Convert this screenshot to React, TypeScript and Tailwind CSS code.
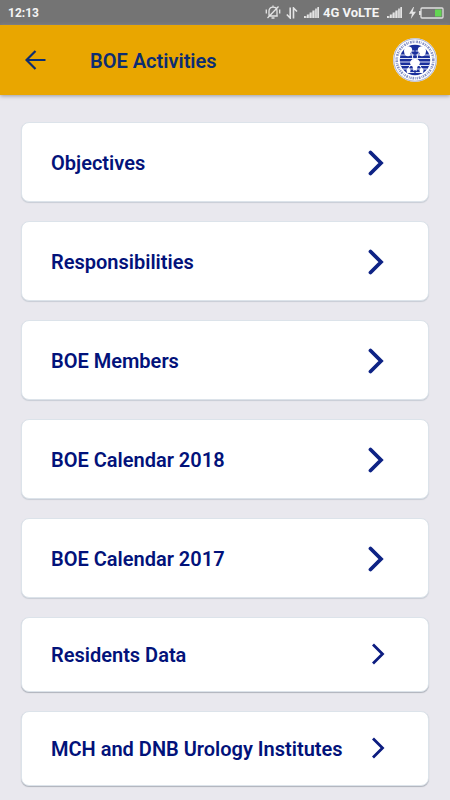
type Activity = { title: string; compact?: boolean };

const activities: Activity[] = [
  { title: "Objectives" },
  { title: "Responsibilities" },
  { title: "BOE Members" },
  { title: "BOE Calendar 2018" },
  { title: "BOE Calendar 2017" },
  { title: "Residents Data", compact: true },
  { title: "MCH and DNB Urology Institutes", compact: true },
];

function SignalIcon() {
  return (
    <svg width="15" height="11" viewBox="0 0 16 11" preserveAspectRatio="none" fill="#e4e4e4" aria-hidden="true">
      <path d="M0 11V9h2v2zM3 11V7.500h2V11zM6 11V5.500h2V11zM9 11V3.500h2V11zM12 11V1.500h1.500V11zM14.300 11V0H16v11z" />
      <path d="M0 11L16 0v11z" opacity=".45" />
    </svg>
  );
}

function StatusBar() {
  return (
    <div className="flex h-[25px] items-center justify-between bg-[#747474] pr-[6px] pl-2 font-bold text-[#f4f4f4]">
      <span className="text-xs">12:13</span>
      <div className="flex items-center">
        <svg width="16" height="15" viewBox="0 0 16 15" fill="none" stroke="#e4e4e4" strokeWidth="1.300" aria-hidden="true">
          <path d="M3.500 11h9.300M4 10.500V6c0-2.300 1.500-3.800 4-3.800S12 3.700 12 6v4.500M8 2V.5M6.500 13h3M1.300 4.500v4M14.700 4.500v4M13.500 1.500L2.500 13" />
        </svg>
        <svg className="ml-[5px]" width="12" height="12" viewBox="0 0 12 12" fill="none" stroke="#e4e4e4" strokeWidth="1.600" aria-hidden="true">
          <path d="M4.200 0.500v10.500L.8 7.500M7.500 11.500V1L11 4.500" />
        </svg>
        <span className="ml-[6px] flex"><SignalIcon /></span>
        <span className="ml-1 text-[13px]">4G VoLTE</span>
        <span className="ml-2 flex"><SignalIcon /></span>
        <svg className="ml-[7px]" width="7" height="12" viewBox="0 0 7 12" fill="#e4e4e4" aria-hidden="true">
          <path d="M4.300 0L0 6.700h3L1.800 12 7 4.800H3.700L5 0z" />
        </svg>
        <svg className="ml-[3px]" width="25" height="12" viewBox="0 0 25 12" aria-hidden="true">
          <rect x="2" y="1" width="22" height="10" rx="1" fill="none" stroke="#dedede" strokeWidth="1.300" />
          <path d="M0 4h2v4H0z" fill="#dedede" />
          <path d="M16 2.500h6.500v7H16z" fill="#63d552" />
        </svg>
      </div>
    </div>
  );
}

function SocietyLogo() {
  return (
    <svg width="44" height="44" viewBox="0 0 44 44" aria-hidden="true">
      <circle cx="22" cy="22" r="22" fill="#fff" />
      <circle cx="22" cy="22" r="21.200" fill="none" stroke="#8d98c8" strokeWidth=".8" />
      <circle cx="22" cy="22" r="18.300" fill="none" stroke="#8792c6" strokeWidth="2.600" strokeDasharray="1.200 .8 .7 1.100 1.700 .9" />
      <circle cx="22" cy="22" r="15.200" fill="#1a2f9c" />
      <path d="M11 13h22M8 17h28M7 20.500h30M7 24h30M8 27.500h28M10 31h24M14 34.500h16" fill="none" stroke="#dfe4f5" strokeWidth="1.100" />
      <g fill="#fff">
        <path d="M16.500 8.500c-3-.7-5.500 1-5.500 4.500s2 5.500 4.300 5.300c2.500-.2 2.500-2 2-3.500 2.700-1.500 2.500-5.500-.8-6.300z" />
        <path d="M27.500 8.500c3-.7 5.500 1 5.500 4.500s-2 5.500-4.300 5.300c-2.500-.2-2.500-2-2-3.500-2.700-1.500-2.500-5.500.8-6.300z" />
        <path d="M18 22.500c1.800-2 6.200-2 8 0s.8 4.500-1.500 6L23.500 33h-3l-1-4.500c-2.300-1.500-3.300-4-1.500-6z" />
        <ellipse cx="15.500" cy="32.500" rx="2" ry="2.500" />
        <ellipse cx="28.500" cy="32.500" rx="2" ry="2.500" />
      </g>
      <path d="M17.500 14c2.500 2 2 5 2.500 9M26.500 14c-2.500 2-2 5-2.500 9M15.500 31c.5-3 2-4 4-3.500M28.500 31c-.5-3-2-4-4-3.500" fill="none" stroke="#fff" />
      <path d="M22 8v11M22 32v5" stroke="#1a2f9c" strokeWidth="1.300" />
    </svg>
  );
}

function Chevron({ compact }: { compact?: boolean }) {
  return compact ? (
    <svg className="mr-[3px] mb-[2px]" width="14" height="22" viewBox="0 0 14 22" fill="none" stroke="#0c1c80" strokeWidth="2.800" aria-hidden="true">
      <path d="M2 1.500L11.500 11 2 20.500" />
    </svg>
  ) : (
    <svg className="mr-1" width="16" height="26" viewBox="0 0 16 26" fill="none" stroke="#0e2385" strokeWidth="3.800" strokeLinecap="round" aria-hidden="true">
      <path d="M2.500 2.500L13 13 2.500 23.500" />
    </svg>
  );
}

function ActivityCard({ title, compact }: Activity) {
  return (
    <button
      type="button"
      className={`flex w-full cursor-pointer items-center justify-between rounded-lg border border-[#dce3ea] bg-white pr-10 pl-[29px] text-left text-xl font-semibold text-[#02127a] ${
        compact ? "h-[75px] shadow-[0_1px_1px_#aeb2bb]" : "h-20 pt-[2px] shadow-[0_1px_1px_#c8cdd5]"
      }`}
    >
      <span>{title}</span>
      <Chevron compact={compact} />
    </button>
  );
}

export default function App() {
  return (
    <div className="min-h-screen bg-[#e9e8ee] font-['Roboto',sans-serif]">
      <StatusBar />
      <header className="flex h-[70px] items-center bg-[#e9a600] pr-[13px] pl-[25px] shadow-[0_1px_4px_#99999f]">
        <button type="button" aria-label="Back" className="cursor-pointer">
          <svg width="21" height="20" viewBox="0 0 21 20" fill="none" stroke="#0c2d72" strokeWidth="2.200" aria-hidden="true">
            <path d="M20.500 10H2M10.500 1L1.500 10l9 9" />
          </svg>
        </button>
        <h1 className="ml-11 flex-1 pt-[2px] text-xl font-semibold text-[#0c2d72]">BOE Activities</h1>
        <SocietyLogo />
      </header>
      <main className="flex flex-col gap-[19px] px-[21px] pt-[27px] pb-[14px]">
        {activities.map((activity) => (
          <ActivityCard key={activity.title} {...activity} />
        ))}
      </main>
    </div>
  );
}
